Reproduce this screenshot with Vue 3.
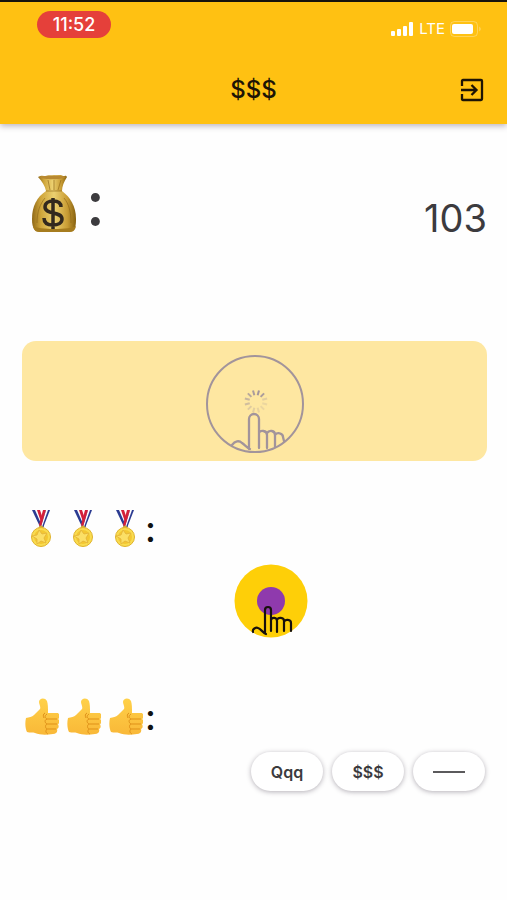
<script setup>
import { ref } from 'vue';

const time = '11:52';
const title = '$$$';
const balance = ref(103);
const chips = ref(['Qqq', '$$$', '—']);
const rays = [1, 0.9, 0.3, 0.2, 0.2, 0.25, 0.3, 0.35, 0.5, 0.6, 0.75, 0.9];

function tap() {
  balance.value++;
}
</script>

<template>
  <div class="screen">
    <header class="header">
      <div class="status">
        <span class="time">{{ time }}</span>
        <div class="signal">
          <svg width="23" height="14" viewBox="0 0 23 14" fill="#fff">
            <rect x="0" y="9" width="4" height="5" rx="1" />
            <rect x="6" y="7" width="4" height="7" rx="1" />
            <rect x="12" y="4" width="4" height="10" rx="1" />
            <rect x="18" y="0" width="4" height="14" rx="1" />
          </svg>
          <span>LTE</span>
          <svg width="32" height="16" viewBox="0 0 32 16">
            <rect x="0.5" y="0.5" width="27" height="15" rx="4" fill="none" stroke="#fff" stroke-opacity="0.3" />
            <rect x="2" y="3" width="21" height="10" rx="2" fill="#fff" />
            <path d="M29.5 5.5q2 2.500 0 5z" fill="#fff" fill-opacity="0.5" />
          </svg>
        </div>
      </div>
      <div class="bar">
        <h1>{{ title }}</h1>
        <button class="exit" type="button" aria-label="Exit">
          <svg width="24" height="24" viewBox="0 0 24 24" fill="none" stroke="#1d1405" stroke-width="2.300">
            <path d="M2 8V3q0-1 1-1h18q1 0 1 1v18q0 1-1 1H3q-1 0-1-1v-5M1 12h15M11.500 7l5 5-5 5" />
          </svg>
        </button>
      </div>
    </header>

    <main>
      <section class="balance">
        <div class="bag">
          <svg width="46" height="60" viewBox="0 0 46 60">
            <defs>
              <linearGradient id="bagFill" x1="0" x2="1" y1="0" y2="0">
                <stop offset="0" stop-color="#8f6817" />
                <stop offset="0.2" stop-color="#cfa53a" />
                <stop offset="0.5" stop-color="#ecd070" />
                <stop offset="0.8" stop-color="#c99d35" />
                <stop offset="1" stop-color="#86600f" />
              </linearGradient>
            </defs>
            <path d="M15 17C6 23 1 32 1 45c0 10 3 13 9 13h27c6 0 8-3 8-13 0-13-6-22-14-28z" fill="url(#bagFill)" />
            <path d="M2 52c1 5 3 6 8 6h27c5 0 7-1 8-6-5 4-38 4-43 0z" fill="#a67c1f" />
            <path d="M7 3c3-2 6-1 8-1 3-1 5 0 8-1 4 1 6-1 9 1 2 0 3-1 4 1-3 5-5 9-5 14H15C14 12 11 7 7 3z" fill="url(#bagFill)" />
            <path d="M8 3c5 3 22 3 27 0-7-2-20-2-27 0z" fill="#b88931" />
            <path d="M15 17h16M17 6l2 10M23 6v10M30 6l-3 10M14 24c-5 6-8 14-8 25M33 24c5 6 7 14 7 25" fill="none" stroke="#8b6315" stroke-width="1" opacity="0.6" />
            <path d="M30 33c0-4-3-6-8-6-4 0-8 2-8 6 0 8 17 4 17 12 0 4-4 6-9 6s-9-2-9-7M22 24v31" fill="none" stroke="#33291e" stroke-width="3.500" />
          </svg>
          <span class="colon">:</span>
        </div>
        <span class="amount">{{ balance }}</span>
      </section>

      <button class="tap" type="button" aria-label="Tap" @click="tap">
        <svg width="98" height="98" viewBox="0 0 98 98" fill="none" stroke="#a2949b" stroke-width="2">
          <circle cx="49" cy="49" r="48" />
          <path
            v-for="(opacity, i) in rays"
            :key="i"
            d="M50 35v5"
            :transform="`rotate(${i * 30 + 15} 50 46.500)`"
            :stroke-opacity="opacity"
          />
          <path
            d="M26 90c3-4 7-5 10-2 3 2 5 5 8 6M43 94V64a5 5 0 0 1 10 0v29M53 78c1-3 8-3 8 2v13M61 78c2-3 8-3 8 2v12M69 80c2-3 8-2 8 2l1 4"
            stroke-width="2.300"
            stroke-linecap="round"
          />
        </svg>
      </button>

      <section class="medals">
        <h2>
          <svg v-for="n in 3" :key="n" width="34" height="38" viewBox="0 0 34 38">
            <path d="M7 0h4l8 16-3 3z" fill="#2b3b91" />
            <path d="M10 0h3l6 14-2 2z" fill="#fff" />
            <path d="M12 0h3l4 12-2 3z" fill="#d3203b" />
            <path d="M25 0h-4l-6 16 3 2z" fill="#2b3b91" />
            <path d="M23 0h-2l-5 16 1 1z" fill="#fff" />
            <path d="M21 0h-3l-4 15 2 2z" fill="#d3203b" />
            <circle cx="16" cy="18" r="2" fill="#f4dc72" stroke="#c79b1b" />
            <circle cx="16" cy="27" r="9.500" fill="#f9dc50" stroke="#e0b32c" />
            <circle cx="16" cy="27" r="7" fill="#f3c732" />
            <path d="M14 20l3 4 5-1-3 5 2 5-5-2-4 3v-5l-5-3 5-1z" fill="#fbdf66" stroke="#e3b238" stroke-width="0.800" />
          </svg>
          <span class="colon">:</span>
        </h2>
        <div class="badge">
          <svg width="74" height="74" viewBox="0 0 74 74">
            <circle cx="37" cy="37" r="36.500" fill="#fecf08" />
            <circle cx="37" cy="37" r="14" fill="#8f3aad" />
            <path
              d="M19 68c-1-3 3-5 5-4 3 1 4 4 8 6M31 69V46a3 3 0 0 1 6 0v21M37 56c1-3 6-3 6 1v11M43 56c1-3 7-3 7 1v10M50 58c1-3 7-3 7 1v8"
              fill="none"
              stroke="#17100c"
              stroke-width="2.200"
              stroke-linecap="round"
            />
          </svg>
        </div>
      </section>

      <section class="likes">
        <h2>
          <svg v-for="n in 3" :key="n" width="34" height="38" viewBox="0 0 34 38">
            <defs>
              <linearGradient id="thumbFill" x1="0" x2="0" y1="0" y2="1">
                <stop offset="0" stop-color="#ffd149" />
                <stop offset="1" stop-color="#f9b838" />
              </linearGradient>
            </defs>
            <path
              d="M1 20c3-1 6-1 8-3l6-6c1-2-1-5-1-7 0-4 6-5 8-1 1 3 1 7 1 12h9c3 0 3 5 1 6 2 1 2 4 0 5 1 2 1 4-1 5 1 3-1 5-4 5-7 1-13 1-18-1-2-1-5 0-8-1-2-4-2-10-1-14z"
              fill="url(#thumbFill)"
            />
            <path d="M20 15c-2 1-2 3-1 5M32 21H22M32 26H22M31 31h-9M22 16c-3 2-2 4 0 5-3 1-2 4 0 5-2 1-2 4 0 5-2 2-1 4 1 5" fill="none" stroke="#df9119" stroke-width="1" />
          </svg>
          <span class="colon">:</span>
        </h2>
        <div class="chips">
          <button v-for="(chip, i) in chips" :key="i" class="chip" type="button">
            <span v-if="chip !== '—'">{{ chip }}</span>
            <span v-else class="dash" aria-label="—"></span>
          </button>
        </div>
      </section>
    </main>
  </div>
</template>

<style>
body {
  margin: 0;
  background: #fefefe;
}
</style>

<style scoped>
.screen {
  font-family: Inter, "Liberation Sans", sans-serif;
  color: #3c3b3e;
}

button {
  font: inherit;
  color: inherit;
  border: 0;
  padding: 0;
  cursor: pointer;
}

svg {
  display: block;
  flex: none;
}

.header {
  background: #ffc112;
  border-top: 2px solid #17130c;
  box-shadow: 0 2px 6px rgba(60, 40, 70, 0.35);
}

.status {
  display: flex;
  justify-content: space-between;
  align-items: flex-start;
  padding: 9px 25px 0 37px;
}

.time {
  width: 74px;
  border-radius: 14px;
  background: #e5403a;
  color: #fff;
  font-size: 18px;
  font-weight: 500;
  line-height: 27px;
  text-align: center;
}

.signal {
  display: flex;
  align-items: center;
  gap: 5px;
  padding-top: 9px;
  color: #fff;
  font-size: 15px;
  line-height: 18px;
}

.bar {
  display: grid;
  grid-template-columns: 1fr auto 1fr;
  align-items: center;
  padding: 36px 23px 19px;
}

h1 {
  grid-column: 2;
  margin: 0;
  color: #1d1405;
  font-size: 24px;
  font-weight: 500;
  line-height: 31px;
}

.exit {
  justify-self: end;
  background: none;
}

main {
  padding: 50px 20px 40px 22px;
}

.balance {
  display: flex;
  justify-content: space-between;
  align-items: flex-start;
}

.bag {
  display: flex;
  align-items: center;
  gap: 9px;
  padding-left: 9px;
}

.bag .colon {
  font-size: 62px;
  font-weight: 500;
  line-height: 60px;
}

.amount {
  padding-top: 20px;
  font-size: 38px;
  line-height: 48px;
}

.tap {
  display: flex;
  justify-content: center;
  width: 100%;
  margin-top: 99px;
  padding: 14px 0 8px;
  border-radius: 14px;
  background: #fee7a1;
}

h2 {
  display: flex;
  align-items: center;
  gap: 8px;
  margin: 0;
  padding-left: 3px;
  color: #111;
  font-size: 36px;
  font-weight: 500;
  line-height: 38px;
}

h2 .colon {
  margin-left: -6px;
}

.medals {
  margin-top: 49px;
}

.badge {
  display: flex;
  justify-content: center;
  margin-top: 16px;
  padding-left: 32px;
}

.likes {
  margin-top: 60px;
}

.chips {
  display: flex;
  justify-content: flex-end;
  gap: 9px;
  margin-top: 16px;
  padding-right: 2px;
}

.chip {
  display: flex;
  align-items: center;
  justify-content: center;
  width: 72px;
  height: 39px;
  border-radius: 20px;
  background: #fff;
  box-shadow: 0 1px 5px rgba(40, 30, 50, 0.35);
  font-size: 16px;
  font-weight: 600;
}

.dash {
  width: 32px;
  height: 2px;
  background: #5b5a5c;
}
</style>
